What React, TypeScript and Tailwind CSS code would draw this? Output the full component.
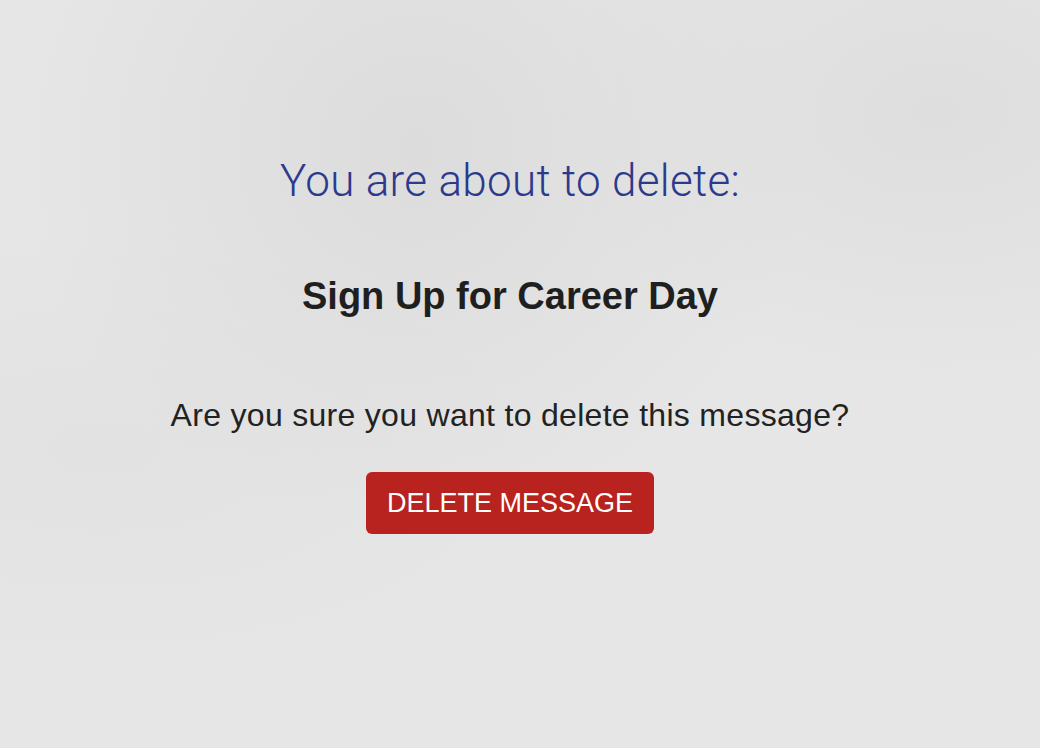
export default function App() {
  return (
    <div className="flex h-[748px] w-full flex-col items-center bg-[#e6e6e6] bg-[radial-gradient(ellipse_at_40%_20%,#dcdcdc_0%,transparent_45%),radial-gradient(ellipse_at_90%_15%,#dedede_0%,transparent_30%),radial-gradient(ellipse_at_10%_60%,#e2e2e2_0%,transparent_35%)] pr-[20px] font-['Liberation_Sans',Arial,sans-serif]">
      <h1 className="mt-[155px] font-['Roboto',sans-serif] text-[44px] font-light leading-[52px] tracking-[0.3px] text-[#2b3a8c]">
        You are about to delete:
      </h1>
      <h2 className="mt-[67px] text-[38px] font-bold leading-[44px] text-[#1f1f1f]">
        Sign Up for Career Day
      </h2>
      <p className="mt-[77px] text-[32px] leading-[40px] tracking-[0.3px] text-[#222]">
        Are you sure you want to delete this message?
      </p>
      <button
        type="button"
        className="mt-[37px] h-[62px] w-[288px] rounded-[6px] bg-[#b8231f] text-[27px] text-white"
      >
        DELETE MESSAGE
      </button>
    </div>
  );
}
